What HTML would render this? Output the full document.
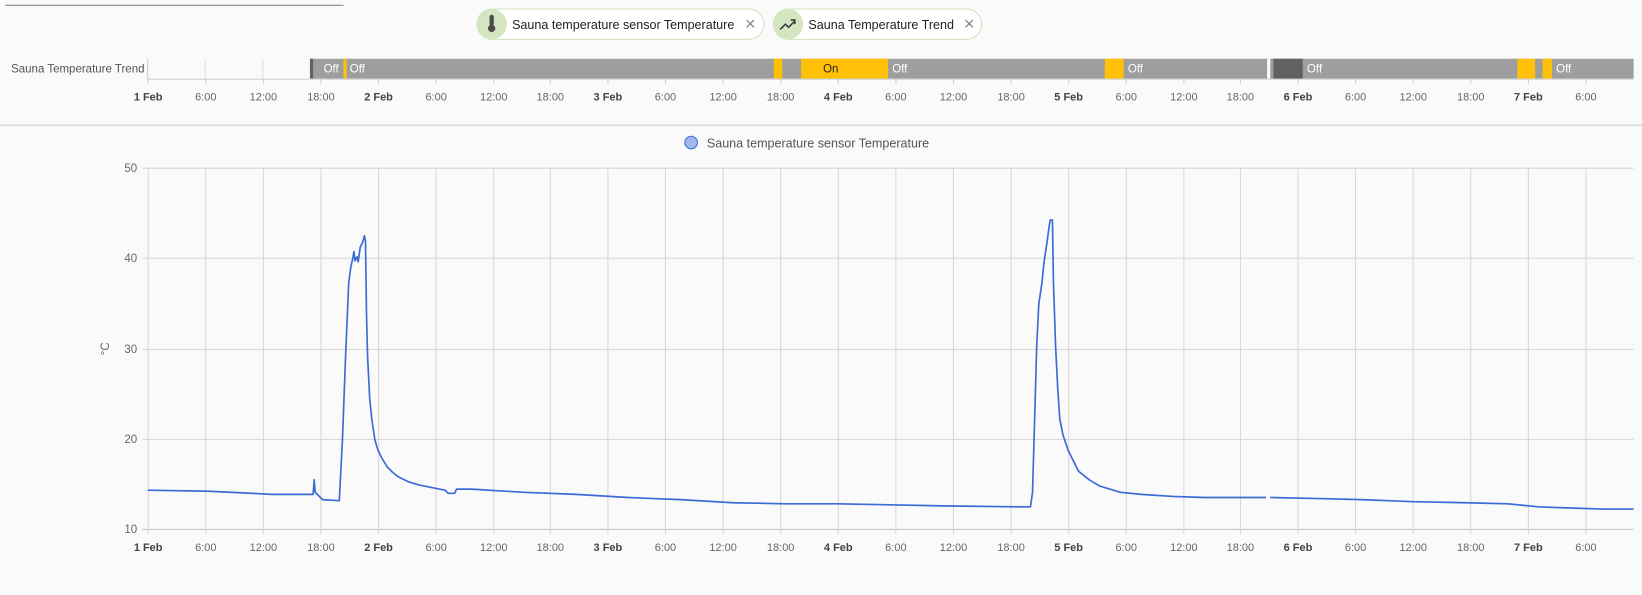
<!DOCTYPE html>
<html><head><meta charset="utf-8"><style>
html,body{margin:0;padding:0;background:#fafafa;width:1642px;height:595px;overflow:hidden}
svg{display:block}
text{font-family:"Liberation Sans",sans-serif}
</style></head><body>
<svg width="1642" height="595" viewBox="0 0 1568 568" xmlns="http://www.w3.org/2000/svg">
<rect width="1568" height="568" fill="#fafafa"/>
<line x1="5" y1="5" x2="328" y2="5" stroke="#888" stroke-width="1"/>
<g>
<rect x="455.5" y="8.5" width="274" height="29" rx="14.5" fill="#fff" stroke="#cfe4b8"/>
<circle cx="469.5" cy="23" r="14.5" fill="#d3e6c1"/>
<rect x="467.5" y="14" width="4" height="11" rx="2" fill="#4a4a4a"/>
<circle cx="469.5" cy="27" r="3.5" fill="#4a4a4a"/>
<text x="489" y="27.5" font-size="12" fill="#222">Sauna temperature sensor Temperature</text>
<path d="M713 19l7 7M720 19l-7 7" stroke="#777" stroke-width="1.1"/>
<rect x="738.5" y="8.5" width="199" height="29" rx="14.5" fill="#fff" stroke="#cfe4b8"/>
<circle cx="752.5" cy="23" r="14.5" fill="#d3e6c1"/>
<path d="M745 28l5-5 3 3 6-6M755 19h4v4" stroke="#3a3a3a" stroke-width="1.5" fill="none"/>
<text x="772" y="27.5" font-size="12" fill="#222">Sauna Temperature Trend</text>
<path d="M922 19l7 7M929 19l-7 7" stroke="#777" stroke-width="1.1"/>
</g>
<text x="138" y="69" font-size="11" fill="#555" text-anchor="end">Sauna Temperature Trend</text>
<g stroke="#e0e0e0"><line x1="196" y1="56" x2="196" y2="75"/><line x1="251" y1="56" x2="251" y2="75"/></g>
<line x1="141" y1="56" x2="141" y2="75" stroke="#ccc"/>
<g>
<rect x="296" y="56" width="1264" height="19" fill="#9e9e9e"/>
<rect x="296" y="56" width="3" height="19" fill="#616161"/>
<rect x="328" y="56" width="3" height="19" fill="#ffc107"/>
<rect x="739" y="56" width="8" height="19" fill="#ffc107"/>
<rect x="765" y="56" width="83" height="19" fill="#ffc107"/>
<rect x="1055" y="56" width="18" height="19" fill="#ffc107"/>
<rect x="1210" y="56" width="3" height="19" fill="#fafafa"/>
<rect x="1216" y="56" width="28" height="19" fill="#616161"/>
<rect x="1449" y="56" width="17" height="19" fill="#ffc107"/>
<rect x="1473" y="56" width="9" height="19" fill="#ffc107"/>
</g>
<g font-size="11" fill="#fff">
<text x="309" y="69">Off</text><text x="334" y="69">Off</text>
<text x="852" y="69">Off</text><text x="1077" y="69">Off</text>
<text x="1248" y="69">Off</text><text x="1486" y="69">Off</text>
<text x="786" y="69" fill="#222">On</text>
</g>
<line x1="141" y1="75.5" x2="1560" y2="75.5" stroke="#ccc"/>
<line x1="0" y1="119.5" x2="1568" y2="119.5" stroke="#ddd" stroke-width="2"/>
<circle cx="660" cy="136" r="6" fill="#a1b6ea" stroke="#3f6fd6"/>
<text x="675" y="141" font-size="12" fill="#555">Sauna temperature sensor Temperature</text>
<g stroke="#d6d6d6" stroke-width="1">
<line x1="136" y1="160.5" x2="1560" y2="160.5"/>
<line x1="136" y1="246.5" x2="1560" y2="246.5"/>
<line x1="136" y1="333.5" x2="1560" y2="333.5"/>
<line x1="136" y1="419.5" x2="1560" y2="419.5"/>
</g>
<line x1="136" y1="505.5" x2="1560" y2="505.5" stroke="#c8c8c8"/>
<g id="vg" stroke="#d6d6d6"></g>
<g font-size="11" fill="#666" text-anchor="end">
<text x="131" y="164">50</text><text x="131" y="250">40</text><text x="131" y="337">30</text><text x="131" y="423">20</text><text x="131" y="509">10</text>
</g>
<text transform="translate(104 333) rotate(-90)" font-size="11" fill="#666" text-anchor="middle">°C</text>
<g id="labels"></g>
<polyline fill="none" stroke="#3c6bd6" stroke-width="1.6" stroke-linejoin="round" points="141,468 200,469 260,472 299,472 300,458 301,470 303,472 308,477 324,478 327,420 330,340 333,270 335,255 337,246 338,240 339,249 341,245 342,250 344,236 346,232 347,229 348,225 349,230 350,300 351,340 353,380 355,400 358,420 361,430 365,438 370,446 375,451 380,455 390,460 400,463 410,465 420,467 425,468 428,471 434,471 436,467 450,467 500,470 550,472 600,475 650,477 700,480 750,481 800,481 850,482 900,483 984,484 986,470 988,400 990,330 992,290 995,270 997,250 1000,230 1002,215 1003,210 1005,210 1006,270 1008,330 1010,370 1012,400 1015,415 1020,430 1025,440 1030,450 1040,458 1050,464 1060,467 1070,470 1090,472 1120,474 1150,475 1209,475"/>
<polyline fill="none" stroke="#3c6bd6" stroke-width="1.6" points="1213,475 1260,476 1300,477 1350,479 1400,480 1440,481 1470,484 1500,485 1530,486 1560,486"/>
<script>
var L=["1 Feb","6:00","12:00","18:00","2 Feb","6:00","12:00","18:00","3 Feb","6:00","12:00","18:00","4 Feb","6:00","12:00","18:00","5 Feb","6:00","12:00","18:00","6 Feb","6:00","12:00","18:00","7 Feb","6:00"];
var ns="http://www.w3.org/2000/svg",vg=document.getElementById("vg"),lb=document.getElementById("labels");
function el(t,a,p){var e=document.createElementNS(ns,t);for(var k in a)e.setAttribute(k,a[k]);p.appendChild(e);return e;}
for(var i=0;i<26;i++){var x=Math.round(141+i*54.92)+0.5;
el("line",{x1:x,y1:160,x2:x,y2:510},vg);
el("line",{x1:x,y1:75,x2:x,y2:80,stroke:"#ccc"},lb);
var b=L[i].indexOf("Feb")>0;
var t=el("text",{x:x,y:96,"font-size":10.5,fill:b?"#444":"#666","font-weight":b?"bold":"normal","text-anchor":"middle"},lb);t.textContent=L[i];
var t2=el("text",{x:x,y:526,"font-size":10.5,fill:b?"#444":"#666","font-weight":b?"bold":"normal","text-anchor":"middle"},lb);t2.textContent=L[i];}
</script>
</svg>
</body></html>
